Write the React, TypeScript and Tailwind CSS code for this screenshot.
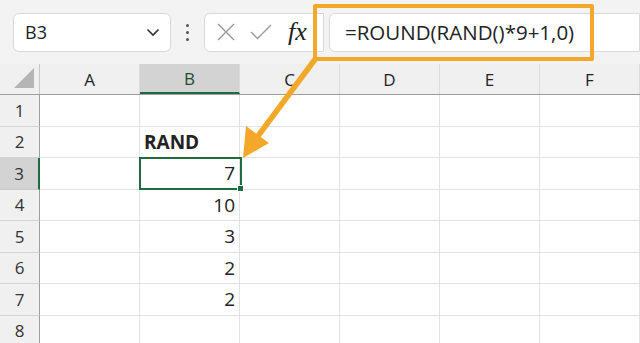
import React from "react"

const cols = ["A", "B", "C", "D", "E", "F"]

const rows: { n: number; b?: string; bold?: boolean }[] = [
  { n: 1 },
  { n: 2, b: "RAND", bold: true },
  { n: 3, b: "7" },
  { n: 4, b: "10" },
  { n: 5, b: "3" },
  { n: 6, b: "2" },
  { n: 7, b: "2" },
  { n: 8 },
]

export default function App() {
  return (
    <div className="relative h-[343px] w-[640px] overflow-hidden bg-[#f3f3f3] font-['Open_Sans','Noto_Sans',sans-serif] text-[#222]">
      {/* Formula bar */}
      <div className="flex h-[64px] items-center pl-[13px]">
        <div className="flex h-[39px] w-[158px] items-center justify-between rounded-[6px] border border-[#d9d9d9] bg-white pl-[11px] pr-[10px]">
          <span className="text-[18px]">B3</span>
          <svg width="14" height="9" viewBox="0 0 14 9" fill="none" stroke="#333" strokeWidth="1.6">
            <path d="M1.5 1.5 L7 7 L12.5 1.5" />
          </svg>
        </div>
        <div className="flex w-[33px] flex-col items-center gap-[4px]">
          <span className="h-[3px] w-[3px] rounded-full bg-[#555]" />
          <span className="h-[3px] w-[3px] rounded-full bg-[#555]" />
          <span className="h-[3px] w-[3px] rounded-full bg-[#555]" />
        </div>
        <div className="flex h-[39px] w-[120px] items-center rounded-l-[6px] border border-[#d9d9d9] bg-white pl-[12px]">
          <svg width="18" height="18" viewBox="0 0 18 18" stroke="#9a9a9a" strokeWidth="1.4">
            <path d="M1 1 L17 17 M17 1 L1 17" />
          </svg>
          <svg className="ml-[15px]" width="22" height="16" viewBox="0 0 22 16" fill="none" stroke="#9a9a9a" strokeWidth="1.4">
            <path d="M1 8 L7.5 14.5 L21 1" />
          </svg>
          <span className="ml-[16px] font-['Liberation_Serif',serif] text-[26px] italic leading-none text-[#222]">fx</span>
        </div>
        <div className="ml-[5px] flex h-[39px] flex-1 items-center rounded-l-[6px] border border-[#d9d9d9] bg-white pl-[15px]">
          <span className="text-[20.5px]">=ROUND(RAND()*9+1,0)</span>
        </div>
      </div>

      {/* Column headers */}
      <div className="flex h-[31px] border-b border-[#9e9e9e] bg-[#f0f0f0]">
        <div className="flex w-[40px] items-end justify-end border-r border-[#c8c8c8] pb-[6px] pr-[5px]">
          <div className="h-0 w-0 border-b-[20px] border-l-[20px] border-b-[#b5b5b5] border-l-transparent" />
        </div>
        {cols.map((c) => (
          <div
            key={c}
            className={`flex w-[100px] items-center justify-center border-r border-[#dcdcdc] pt-[1px] text-[17px] ${
              c === "B" ? "border-b-2 border-b-[#1e6b41] bg-[#d3d3d3] text-[#1e4d33]" : ""
            }`}
          >
            {c}
          </div>
        ))}
      </div>

      {/* Grid */}
      {rows.map((r) => (
        <div key={r.n} className="flex h-[31.5px]">
          <div
            className={`flex w-[40px] items-center justify-center border-b border-r text-[17px] ${
              r.n === 3
                ? "border-r-2 border-b-[#c8c8c8] border-r-[#1e6b41] bg-[#d3d3d3] text-[#333]"
                : "border-b-[#d4d4d4] border-r-[#9e9e9e] bg-[#f0f0f0] text-[#333]"
            }`}
          >
            {r.n}
          </div>
          {cols.map((c) => (
            <div
              key={c}
              className={`flex w-[100px] items-center border-b border-r border-[#e1e1e1] bg-white text-[19px] ${
                c === "B" && r.bold ? "justify-start pl-[4px] font-bold" : "justify-end pr-[4px]"
              }`}
            >
              {c === "B" ? r.b : ""}
            </div>
          ))}
        </div>
      ))}

      {/* Active cell B3 */}
      <div className="pointer-events-none absolute left-[139px] top-[157px] h-[33px] w-[103px] border-2 border-[#1e6b41]">
        <div className="absolute -bottom-[4px] -right-[4px] h-[7px] w-[7px] border border-white bg-[#1e6b41]" />
      </div>

      {/* Highlight + arrow */}
      <div className="pointer-events-none absolute left-[313px] top-[4px] h-[57px] w-[281px] rounded-[2px] border-[4px] border-[#f4a82a]" />
      <svg className="pointer-events-none absolute left-0 top-0" width="640" height="343" viewBox="0 0 640 343">
        <line x1="316" y1="58" x2="258" y2="136" stroke="#f4a82a" strokeWidth="5.5" />
        <path d="M243 158 L246 126 L269 143 Z" fill="#f4a82a" />
      </svg>
    </div>
  )
}
